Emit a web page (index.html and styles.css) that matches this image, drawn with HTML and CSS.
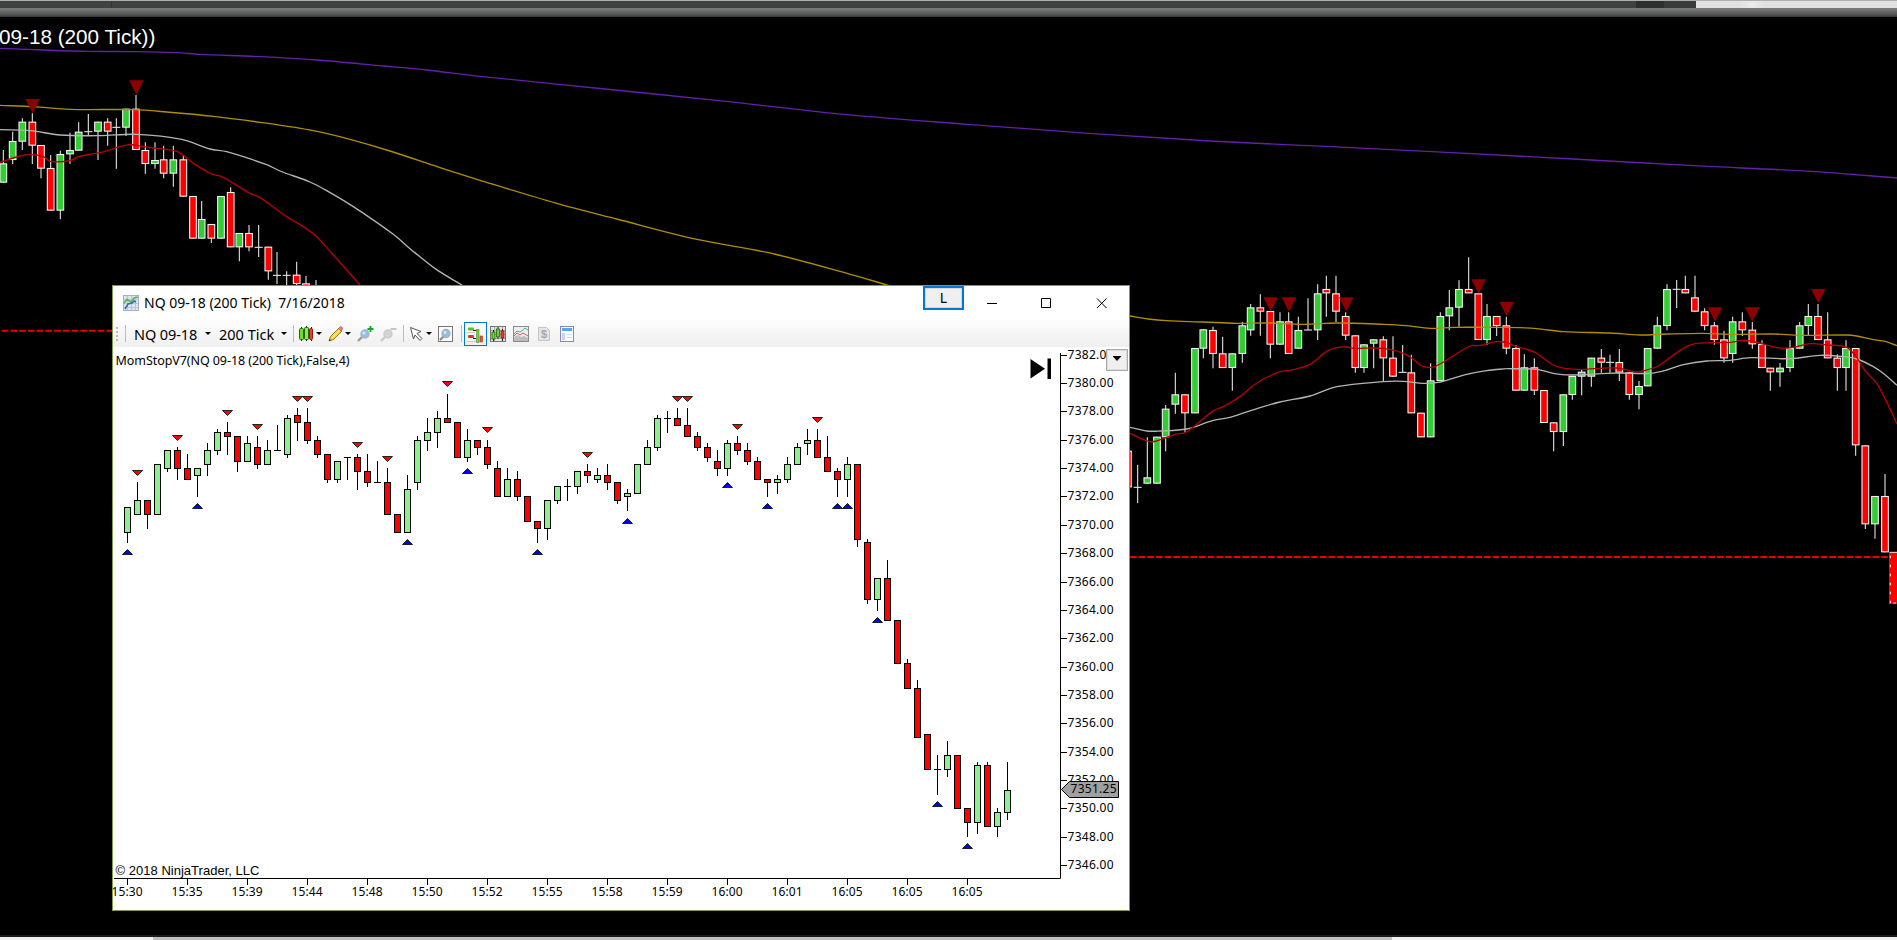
FILE: index.html
```html
<!DOCTYPE html>
<html lang="en">

<head>
    <meta charset="UTF-8" />
    <meta name="viewport" content="width=device-width, initial-scale=1.0" />
    <title>NQ 09-18 (200 Tick)</title>
    <link rel="stylesheet" href="styles.css">
</head>

<body>

    <header class="top-strip">
        <div class="tabs">
            <span class="tab-first"></span>
            <span class="tab-rest"></span>
            <span class="tab-dark"></span>
            <span class="tab-mid"></span>
            <span class="tab-light"></span>
        </div>
        <div class="bevel"></div>
    </header>

    <main class="workspace">
        <svg id="back-chart" class="back-chart" viewBox="0 17 1897 918"></svg>
        <div class="back-title">09-18 (200 Tick))</div>

        <div class="window">
            <div class="title-bar">
                <svg class="app-icon" viewBox="0 0 16 16">
                    <rect x=".5" y=".5" width="15" height="15" fill="#dfe4f2" stroke="#a9b0c6" />
                    <path d="M4.5 1v14M8.5 1v14M12.5 1v14M1 4.5h14M1 8.5h14M1 12.5h14" stroke="#bcc4dd" fill="none" />
                    <path d="M1 8L4 4.5 8 7l3-4 4-1" stroke="#5cb85c" stroke-width="1.8" fill="none" />
                    <path d="M2 14l3-5 4-1 2-2 2 1" stroke="#2f6ea5" stroke-width="1.6" fill="none" />
                </svg>
                <span class="title">NQ 09-18 (200 Tick)&nbsp; 7/16/2018</span>
                <button class="link-btn">L</button>
                <svg class="controls" viewBox="0 0 130 16">
                    <path d="M3 8.500h10M57.500 3.500h9v9h-9zM113 3.500l9.500 9.500M122.500 3.500l-9.500 9.500" fill="none" stroke="#000" />
                </svg>
            </div>

            <div class="toolbar">
                <span class="grip"></span>
                <span class="sep"></span>
                <span class="symbol">NQ 09-18</span>
                <i class="caret"></i>
                <span class="interval">200 Tick</span>
                <i class="caret"></i>
                <span class="sep sep-bars"></span>
                <svg class="icon icon-bars" viewBox="0 0 16 16">
                    <path d="M2.500 1v14M7.500 0v15M12.500 1v14" stroke="#222" />
                    <rect x=".5" y="2.500" width="4" height="11" rx="1" fill="#6fdc2a" stroke="#226014" />
                    <rect x="5.500" y="1.500" width="4" height="12" rx="1" fill="#8bea46" stroke="#226014" />
                    <rect x="10.500" y="2.500" width="3" height="11" rx="1" fill="#f03a2c" stroke="#8d1c14" />
                </svg>
                <i class="caret"></i>
                <svg class="icon icon-pencil" viewBox="0 0 16 16">
                    <path d="M1 15l1.500-4.500L11 2l3 3-8.500 8.500z" fill="#fbd63c" stroke="#9b7a18" />
                    <path d="M4 12l8-8" stroke="#fff3a5" />
                    <path d="M10.500 2.500L12 1q1-.8 2 .2t.3 2L13 5z" fill="#ef7f78" stroke="#b5524c" stroke-width=".7" />
                    <path d="M1 15l.7-2 1.300 1.300z" fill="#222" />
                </svg>
                <i class="caret"></i>
                <svg class="icon icon-zoom-in" viewBox="0 0 17 16">
                    <path d="M1 15l4-4" stroke="#9a9a9a" stroke-width="2.400" />
                    <circle cx="8" cy="8" r="4" fill="#8fc0e6" stroke="#a9b6c2" stroke-width="1.500" />
                    <circle cx="7" cy="7" r="1.500" fill="#d5ebfa" />
                    <path d="M13.500 0v6M10.500 3h6" stroke="#12a52a" stroke-width="1.800" />
                </svg>
                <svg class="icon icon-zoom-out" viewBox="0 0 17 16">
                    <path d="M1 15l4-4" stroke="#c9c9c9" stroke-width="2.400" />
                    <circle cx="8" cy="8" r="4" fill="#d4d4d4" stroke="#cbcbcb" stroke-width="1.500" />
                    <path d="M10.500 3h6" stroke="#b8b8b8" stroke-width="1.600" />
                </svg>
                <span class="sep sep-cursor"></span>
                <svg class="icon icon-cursor" viewBox="0 0 16 16">
                    <path d="M1.500 1.500l10.500 4-4 2 5 5-2 2-5-5.500-1.500 4z" fill="#fff" stroke="#555" />
                </svg>
                <i class="caret"></i>
                <svg class="icon icon-view" viewBox="0 0 16 16">
                    <rect x=".5" y=".5" width="14" height="15" fill="#fafafa" stroke="#777" />
                    <path d="M2 14l3.500-3.500" stroke="#888" stroke-width="2.200" />
                    <circle cx="8" cy="7.500" r="4" fill="#8fbfe4" stroke="#a5b1bd" stroke-width="1.300" />
                    <circle cx="7" cy="6.500" r="1.400" fill="#d5ebfa" />
                </svg>
                <span class="sep sep-panels"></span>
                <span class="selected">
                    <svg class="icon" viewBox="0 0 16 16">
                        <path d="M0 5.500h8M0 14.500h9" stroke="#c7c7c7" />
                        <rect x="1" y=".5" width="6" height="3" rx="1" fill="#52c41d" />
                        <path d="M6 3.500h4" stroke="#222" />
                        <rect x="1" y="8" width="6" height="3" rx="1" fill="#e3342b" />
                        <path d="M6 11.500h3" stroke="#222" />
                        <rect x="9.500" y="2.500" width="2.500" height="13" fill="#6bd42d" stroke="#578942" stroke-width=".6" />
                        <rect x="13" y="9" width="2.500" height="6" fill="#e84a3e" stroke="#a93b33" stroke-width=".6" />
                    </svg>
                </span>
                <svg class="icon icon-chart" viewBox="0 0 16 16">
                    <rect x=".5" y=".5" width="15" height="15" fill="#e3e3e3" stroke="#777" />
                    <path d="M1 4.500h14M1 8.500h14M1 12.500h14M4.500 1v14M12.500 1v14" stroke="#aaa" />
                    <path d="M3.500 4v11M8 1v12M12.500 3v12" stroke="#222" />
                    <rect x="2" y="6" width="3" height="7" fill="#6bd42d" stroke="#275d16" stroke-width=".8" />
                    <rect x="6.500" y="3" width="3" height="8" fill="#6bd42d" stroke="#275d16" stroke-width=".8" />
                    <rect x="11" y="5" width="3" height="7" fill="#e83a2c" stroke="#7f211b" stroke-width=".8" />
                </svg>
                <svg class="icon icon-area" viewBox="0 0 16 16">
                    <rect x=".5" y=".5" width="15" height="15" fill="#eee" stroke="#8a8a8a" />
                    <path d="M1 15v-4l4-2 3 2 3-1 4 2v3z" fill="#bdbdbd" />
                    <path d="M1 8l3-3 3 1 3-2 2-2 3 2" fill="none" stroke="#4cae8d" />
                    <path d="M1 10l3-3 3 2 3-2 5 3" fill="none" stroke="#d75a55" />
                </svg>
                <svg class="icon icon-dollar" viewBox="0 0 16 16">
                    <path d="M.5 1.500h8l3 3v10H.5z" fill="#e6e6e6" stroke="#c4c4c4" />
                    <text x="3" y="12" class="dollar">$</text>
                </svg>
                <svg class="icon icon-props" viewBox="0 0 16 16">
                    <rect x="1.500" y=".5" width="13" height="15" fill="#fafaff" stroke="#8586c4" />
                    <rect x="3" y="2" width="10" height="3" fill="#5aa7ee" />
                    <rect x="3" y="7" width="3" height="7" fill="#cfcff5" />
                    <path d="M7.500 8.500h5M7.500 11.500h5" stroke="#dadbea" />
                </svg>
            </div>

            <div class="chart-area">
                <svg id="front-chart" class="front-chart" viewBox="113 347 1016 563"></svg>
                <button class="menu-btn"><i class="caret"></i></button>
            </div>
        </div>
    </main>

    <footer class="scrollbar"><span class="thumb"></span></footer>

    <script src="chart.js"></script>
</body>

</html>
```
FILE: styles.css
```css
* {
    box-sizing: border-box;
}

body {
    margin: 0;
    height: 940px;
    display: flex;
    flex-direction: column;
    background-color: #000;
    font-family: "Noto Sans", "Open Sans", sans-serif;
    color: #000;
    overflow: hidden;
}

svg {
    display: block;
}

button {
    padding: 0;
    font-family: inherit;
}

/* top strip */
.top-strip {
    height: 17px;
    flex: none;
    border-top: 1px solid #abb0ae;
}

.tabs {
    display: flex;
    height: 7px;
    background-color: #404141;
}

.tab-first {
    width: 112px;
    border-right: 1px solid #333;
}

.tab-rest {
    width: 1524px;
}

.tab-dark {
    width: 28px;
    background-color: #2d2e2e;
}

.tab-mid {
    width: 32px;
    background-color: #393a3a;
}

.tab-light {
    flex: 1;
    background: linear-gradient(90deg, #e1e0e0 22%, #ebebeb 28%, #e1e0e0 34%);
}

.bevel {
    height: 9px;
    background: linear-gradient(#7c7c7c, #727272 25%, #484848 90%, #2d2d2d);
}

.workspace {
    position: relative;
    height: 918px;
    flex: none;
}

.back-chart {
    width: 1897px;
    height: 918px;
}

.back-title {
    position: absolute;
    left: -1px;
    top: 8px;
    font-family: "Liberation Sans", Arial, sans-serif;
    font-size: 20.7px;
    line-height: 24px;
    color: #fff;
    white-space: nowrap;
}

/* floating chart window */
.window {
    position: absolute;
    left: 112px;
    top: 268px;
    width: 1018px;
    height: 626px;
    border: 1px solid #7f9c50;
    background-color: #fff;
    display: flex;
    flex-direction: column;
}

.title-bar {
    height: 34px;
    display: flex;
    align-items: center;
    padding-left: 10px;
}

.app-icon {
    width: 16px;
    height: 16px;
    margin-right: 5px;
}

.title {
    width: 779px;
    font-size: 14px;
    line-height: 34px;
    white-space: nowrap;
}

.link-btn {
    align-self: flex-start;
    width: 41px;
    height: 24px;
    border: 2px solid #0078d7;
    box-shadow: inset 0 0 0 1px #d8d8d8;
    background-color: #efefef;
    font-size: 14px;
    line-height: 18px;
}

.controls {
    width: 130px;
    height: 16px;
    margin-left: 20px;
}

.toolbar {
    height: 27px;
    display: flex;
    align-items: center;
    padding-left: 3px;
    background: linear-gradient(#fdfdfd, #efefef);
    font-size: 14.5px;
    line-height: 28px;
    white-space: nowrap;
}

.grip {
    width: 2px;
    height: 14px;
    background: repeating-linear-gradient(#bbb 0 2px, transparent 2px 4px);
}

.sep {
    width: 1px;
    height: 17px;
    margin-left: 7px;
    background-color: #bdbdbd;
}

.symbol {
    width: 71px;
    margin-left: 8px;
    letter-spacing: -0.1px;
}

.interval {
    width: 62px;
    margin-left: 8px;
}

.caret {
    width: 6px;
    height: 3px;
    background-color: #000;
    clip-path: polygon(0 0, 100% 0, 50% 100%);
}

.icon {
    width: 16px;
    height: 16px;
    flex: none;
    margin-top: 1px;
}

.sep-bars {
    margin-left: 6px;
}

.icon-bars {
    margin-left: 5px;
    margin-right: 1px;
}

.icon-pencil {
    margin-left: 6px;
    margin-right: 1px;
}

.icon-zoom-in {
    width: 17px;
    margin-left: 6px;
}

.icon-zoom-out {
    width: 17px;
    margin-left: 6px;
}

.sep-cursor {
    margin-left: 6px;
}

.icon-cursor {
    margin-left: 5px;
    margin-right: 1px;
}

.icon-view {
    margin-left: 6px;
}

.sep-panels {
    margin-left: 7px;
}

.selected {
    width: 23px;
    height: 24px;
    margin-left: 2px;
    padding: 3px 0 0 2px;
    border: 1px solid #0078d7;
}

.icon-chart {
    margin-left: 3px;
}

.icon-area {
    margin-left: 7px;
}

.icon-dollar {
    margin-left: 9px;
}

.icon-props {
    margin-left: 5px;
}

.dollar {
    font: bold 11px "Liberation Sans", Arial, sans-serif;
    fill: #a6a6a6;
}

.chart-area {
    position: relative;
    height: 563px;
}

.front-chart {
    width: 1016px;
    height: 563px;
}

.axis-label {
    font-size: 12px;
}

.indicator {
    font-size: 12.5px;
}

.copyright {
    font-family: "Liberation Sans", Arial, sans-serif;
    font-size: 13px;
}

.menu-btn {
    position: absolute;
    left: 993px;
    top: 2px;
    width: 22px;
    height: 22px;
    border: 1px solid #aaa;
    box-shadow: inset 0 0 0 1px #dcdcdc;
    background-color: #efefef;
    display: flex;
    align-items: center;
    justify-content: center;
}

.menu-btn .caret {
    width: 9px;
    height: 5px;
    margin-top: -3px;
}

/* bottom scrollbar */
.scrollbar {
    flex: 1;
    border-top: 2px solid #1a1a1a;
    padding-left: 153px;
    background-color: #f0f0f0;
}

.thumb {
    display: block;
    width: 1239px;
    height: 3px;
    background-color: #bfbfbf;
}
```
FILE: chart.js
```js
const NS = 'http://www.w3.org/2000/svg';

function add(parent, name, attrs, text) {
    const el = document.createElementNS(NS, name);
    for (const key in attrs) el.setAttribute(key, attrs[key]);
    if (text) el.textContent = text;
    parent.appendChild(el);
    return el;
}

/* ---------- front chart ---------- */
const front = document.getElementById('front-chart');

// [high, top, bottom, low, color] measured from y = 360, one bar every 10px
const bars = [
    [147,147,172,182,'g'],[122,140,154,154,'g'],[140,140,154,168,'r'],[104,104,154,154,'g'],[90,90,108,111,'g'],
    [87,90,108,119,'r'],[94,108,119,119,'r'],[108,108,115,136,'g'],[83,90,104,115,'g'],[69,72,90,94,'g'],
    [62,72,76,94,'r'],[76,76,101,111,'r'],[76,83,101,101,'g'],[76,87,104,108,'r'],[80,90,104,104,'g'],
    [65,90,90,90,'d'],[55,58,94,97,'g'],[48,55,62,80,'r'],[48,62,80,83,'r'],[76,80,94,97,'r'],
    [94,94,119,122,'r'],[101,101,119,122,'g'],[97,97,97,119,'d'],[94,97,111,129,'r'],[94,111,122,126,'r'],
    [101,122,122,122,'d'],[108,122,154,154,'r'],[154,154,172,172,'r'],[115,129,172,172,'g'],[76,80,122,129,'g'],
    [58,72,80,90,'g'],[51,58,72,87,'g'],[34,58,62,62,'r'],[62,62,97,97,'r'],[69,80,97,101,'g'],
    [80,80,87,94,'r'],[80,87,104,108,'r'],[101,108,136,136,'r'],[108,119,136,136,'g'],[111,119,136,140,'r'],
    [136,136,161,161,'r'],[161,161,168,182,'r'],[140,140,168,179,'g'],[126,126,140,143,'g'],[119,126,126,140,'d'],
    [111,111,126,133,'g'],[104,111,115,122,'r'],[108,115,119,122,'g'],[104,115,122,129,'r'],[122,122,140,143,'r'],
    [129,133,136,150,'g'],[104,104,133,133,'g'],[80,87,104,104,'g'],[55,58,87,90,'g'],[51,58,58,72,'d'],
    [48,58,65,65,'r'],[48,65,76,76,'r'],[72,76,87,90,'r'],[83,87,97,101,'r'],[90,101,108,115,'r'],
    [80,83,108,115,'g'],[76,83,90,94,'r'],[83,90,101,104,'r'],[97,101,119,119,'r'],[119,119,122,136,'r'],
    [115,119,122,133,'g'],[97,104,119,122,'g'],[83,87,104,104,'g'],[69,80,83,94,'g'],[69,80,97,97,'r'],
    [76,97,111,111,'r'],[108,111,119,136,'r'],[97,104,119,136,'g'],[104,104,179,186,'r'],[179,182,239,243,'r'],
    [218,218,239,250,'g'],[200,218,260,260,'r'],[260,260,303,303,'r'],[299,303,328,328,'r'],[320,328,377,377,'r'],
    [374,374,409,409,'r'],[395,409,409,434,'d'],[381,395,409,416,'g'],[395,395,448,448,'r'],[448,448,462,476,'r'],
    [402,405,462,473,'g'],[402,405,466,466,'r'],[448,452,466,476,'g'],[402,430,452,459,'g']
];

bars.forEach(([high, top, bottom, low, color], i) => {
    const x = 127.5 + i * 10;
    add(front, 'path', { d: `M${x} ${360 + high}V${361 + low}`, stroke: '#000' });
    if (color === 'd') {
        add(front, 'path', { d: `M${x - 3.5} ${360.5 + top}h7`, stroke: '#000' });
    } else {
        add(front, 'rect', {
            x: x - 3, y: 360.5 + top, width: 6, height: bottom - top,
            fill: color === 'g' ? '#90ee90' : '#f00', stroke: '#000'
        });
    }
});

// [bar index, y from 360]
const sells = [[1,110],[5,75],[10,50],[13,64],[17,36],[18,36],[23,82],[26,96],[32,21],[36,67],[46,92],[55,36],[56,36],[61,64],[69,57]];
const buys = [[0,189],[7,143],[28,179],[34,108],[41,189],[50,158],[60,122],[64,143],[71,143],[72,143],[75,257],[81,441],[84,483]];

sells.forEach(([i, y]) => {
    add(front, 'path', { d: `M${122.5 + i * 10} ${360.5 + y}h10l-5 5z`, fill: '#f00', stroke: '#000', 'stroke-width': 0.8 });
});
buys.forEach(([i, y]) => {
    add(front, 'path', { d: `M${122.5 + i * 10} ${365.5 + y}h10l-5 -5z`, fill: '#00f', stroke: '#000', 'stroke-width': 0.8 });
});

// axes
add(front, 'path', { d: 'M114 878.5H1060.5V353', fill: 'none', stroke: '#000' });

for (let price = 7382; price >= 7346; price -= 2) {
    const y = Math.round(383 + (7380 - price) * 14.18);
    add(front, 'path', { d: `M1061 ${y + 0.5}h6`, stroke: '#000' });
    add(front, 'text', { x: 1067.5, y: y + 4, class: 'axis-label', textLength: 46 }, price.toFixed(2));
}

const times = ['15:30','15:35','15:39','15:44','15:48','15:50','15:52','15:55','15:58','15:59','16:00','16:01','16:05','16:05','16:05'];
times.forEach((time, i) => {
    const x = 127.5 + i * 60;
    add(front, 'path', { d: `M${x} 879v6`, stroke: '#000' });
    add(front, 'text', { x: x - 16, y: 896, class: 'axis-label', textLength: 31 }, time);
});

// last price marker
add(front, 'path', { d: 'M1061.5 789.5l8-8h49v16h-49z', fill: '#a0a0a0', stroke: '#000' });
add(front, 'text', { x: 1070.5, y: 793, class: 'axis-label', textLength: 46 }, '7351.25');

add(front, 'text', { x: 115.5, y: 365, class: 'indicator', textLength: 234 }, 'MomStopV7(NQ 09-18 (200 Tick),False,4)');
add(front, 'text', { x: 115.5, y: 875, class: 'copyright', textLength: 144 }, '© 2018 NinjaTrader, LLC');
add(front, 'path', { d: 'M1030.500 359v19.500l14.500-9.750zM1047.500 358.500h3.500v20.500h-3.500z' });

/* ---------- back chart, drawn in thirds of a pixel ---------- */
const back = add(document.getElementById('back-chart'), 'g', { transform: 'scale(0.333333)' });

// [x, high, top, bottom, low, color]
const leftBars = [
    [10,450,490,548,548,'g'],[38,395,423,480,492,'g'],[67,355,365,425,450,'g'],[97,340,365,437,492,'r'],
    [123,435,435,506,535,'r'],[152,465,504,632,632,'r'],[181,452,462,632,658,'g'],[210,398,450,463,492,'g'],
    [236,367,395,452,452,'g'],[265,342,395,395,408,'d'],[294,365,365,395,480,'g'],[323,355,365,395,437,'r'],
    [349,355,382,382,506,'d'],[378,326,326,383,408,'g'],[408,285,326,450,450,'r'],[436,427,450,492,521,'r'],
    [465,427,480,492,506,'g'],[491,437,478,521,535,'r'],[520,437,478,521,560,'g'],[550,465,478,590,590,'r'],
    [579,588,588,716,716,'r'],[605,603,657,716,716,'g'],[634,672,672,716,729,'r'],[663,588,588,716,716,'g'],
    [692,562,576,742,742,'r'],[718,699,699,742,784,'g'],[747,675,699,742,754,'r'],[776,675,742,742,771,'d'],
    [805,740,740,814,839,'r'],[831,756,826,826,852,'d'],[860,814,826,826,858,'d'],[890,785,824,852,858,'r'],
    [918,828,850,870,870,'r'],[948,840,866,866,870,'d']
];

const midBars = [
    [24,632,632,742,742,'r'],[53,674,742,742,790,'d'],[82,592,712,731,731,'g'],[111,590,590,731,731,'g'],
    [137,495,506,592,634,'g'],[166,398,463,494,521,'g'],[195,463,463,520,576,'r'],[225,324,324,520,520,'g'],
    [250,268,268,326,355,'g'],[279,260,270,342,385,'r'],[308,290,340,384,384,'r'],[337,340,340,384,452,'g'],
    [367,246,256,342,368,'g'],[392,192,202,271,287,'g'],[421,163,202,215,287,'r'],[451,213,213,314,355,'r'],
    [480,217,244,314,314,'g'],[506,217,244,342,342,'r'],[535,230,270,326,326,'g'],[564,175,270,270,270,'d'],
    [593,133,160,271,300,'g'],[619,107,147,160,230,'r'],[648,107,160,215,246,'r'],[677,217,228,287,300,'r'],
    [706,286,286,384,398,'r'],[732,313,313,384,398,'g'],[761,298,298,311,385,'g'],[790,289,298,355,423,'r'],
    [819,289,353,410,410,'r'],[848,315,397,397,397,'d'],[874,344,397,520,520,'r'],[903,518,518,592,592,'r'],
    [932,370,421,592,592,'g'],[961,217,228,423,423,'g'],[988,150,202,229,271,'g'],[1017,121,147,203,260,'g'],
    [1046,52,147,160,160,'r'],[1075,160,160,300,300,'r'],[1101,192,228,300,314,'g'],[1130,228,228,258,288,'r']
];

const rightBars = [
    [19,230,256,326,343,'r'],[48,315,324,452,452,'r'],[73,343,382,452,452,'g'],[103,355,382,452,465,'r'],
    [132,450,450,549,549,'r'],[161,547,547,576,634,'r'],[190,463,463,576,618,'g'],[217,408,408,465,479,'g'],
    [245,387,395,410,466,'g'],[274,353,353,410,440,'g'],[304,327,353,368,398,'r'],[330,344,367,367,398,'d'],
    [358,327,366,398,423,'r'],[388,397,397,465,479,'r'],[417,423,438,465,508,'g'],[443,324,324,439,439,'g'],
    [472,230,256,326,326,'g'],[501,133,147,258,271,'g'],[530,120,148,148,204,'d'],[556,107,147,160,160,'r'],
    [585,107,172,215,215,'r'],[614,205,214,258,271,'r'],[643,246,256,300,314,'r'],[672,272,298,355,368,'r'],
    [698,230,244,342,368,'g'],[727,217,244,271,288,'r'],[757,246,269,313,326,'r'],[786,301,312,384,384,'r'],
    [811,383,383,397,452,'r'],[840,369,383,397,440,'g'],[870,301,324,384,397,'g'],[899,246,256,326,326,'g'],
    [925,192,228,258,288,'g'],[954,192,228,300,300,'r'],[983,217,298,355,355,'r'],[1012,343,353,384,452,'r'],
    [1038,301,324,384,452,'g'],[1067,324,324,616,647,'r'],[1096,616,616,853,867,'r'],[1125,768,768,853,896,'g'],
    [1155,702,768,937,937,'r']
];

function drawBars(list, dx, dy) {
    const g = add(back, 'g', { transform: `translate(${dx} ${dy})` });
    list.forEach(([x, high, top, bottom, low, color]) => {
        add(g, 'path', { d: `M${x} ${high}V${low}`, stroke: '#e4e4e4', 'stroke-width': 3.3 });
        if (color === 'd') {
            add(g, 'path', { d: `M${x - 12} ${top}h24`, stroke: '#e4e4e4', 'stroke-width': 3.3 });
        } else {
            add(g, 'rect', {
                x: x - 10, y: top + 1.5, width: 20, height: Math.max(bottom - top - 3, 6),
                fill: color === 'g' ? '#32cd32' : '#f00', stroke: '#f2f2f2', 'stroke-width': 3.3
            });
        }
    });
}

// smooth curve through all the points
function drawLine(points, color, dx, dy) {
    const p = points.split(' ').map(s => s.split(',').map(Number));
    let d = `M${p[0]}`;
    for (let i = 0; i < p.length - 1; i++) {
        const [x1, y1] = p[i];
        const [x2, y2] = p[i + 1];
        const prev = p[i - 1] || p[i];
        const next = p[i + 2] || p[i + 1];
        const t = (x2 - x1) / 3;
        const s1 = (y2 - prev[1]) / (x2 - prev[0]);
        const s2 = (next[1] - y1) / (next[0] - x1);
        d += `C${x1 + t} ${y1 + t * s1} ${x2 - t} ${y2 - t * s2} ${x2} ${y2}`;
    }
    add(back, 'path', { d, fill: 'none', stroke: color, 'stroke-width': 4, transform: `translate(${dx} ${dy})` });
}

drawBars(leftBars, 0, 0);
drawBars(midBars, 3360, 720);
drawBars(rightBars, 4500, 720);

// current bar, cut by the right edge
add(back, 'rect', { x: 5667, y: 1656, width: 40, height: 156, fill: '#f00' });
add(back, 'path', { d: 'M5671 1810V1657', stroke: '#eee', 'stroke-width': 3, 'stroke-dasharray': '8 19' });
add(back, 'path', { d: 'M5669 1657h30', stroke: '#e6e6e6', 'stroke-width': 3 });
add(back, 'path', { d: 'M5680 1809h8', stroke: '#eee', 'stroke-width': 3 });

// purple
drawLine('0,145 130,150 265,154 410,155 530,158 600,163 780,170 950,180 1150,198 1280,210 1440,229 1815,267 2178,304 2541,344 2904,373 3267,400 3630,423 3993,440 4356,458 4719,477 5082,497 5445,515 5691,534', '#6420ac', 0, 0);

// gold
const gold = '#b08e00';
drawLine('0,316 100,320 210,328 400,329 500,336 640,349 780,367 940,392 1050,418 1170,453 1320,503 1440,541 1670,610 1850,657 2080,716 2323,762 2541,820 2668,857', gold, 0, 0);
drawLine('20,226 30,228 85,237 140,242 250,246 350,250 450,249 550,253 650,249 790,253 860,257 930,265 1000,262 1140,262', gold, 3360, 720);
drawLine('0,262 60,263 110,266 190,275 330,279 420,285 500,282 610,280 700,283 820,282 900,286 1040,285 1070,288 1120,299 1155,304 1191,317', gold, 4500, 720);

// white
const white = '#b4b4b4';
drawLine('0,389 90,392 180,405 300,407 410,403 545,418 630,447 680,455 800,494 840,513 930,546 980,572 1060,620 1180,703 1230,746 1310,809 1386,855', white, 0, 0);
drawLine('20,560 30,562 80,573 120,573 200,567 280,541 330,532 420,503 480,486 570,468 650,440 790,425 850,424 910,430 950,428 980,421 1040,403 1100,392 1160,386', white, 3360, 720);
drawLine('20,386 110,388 160,400 210,405 320,400 360,399 450,400 500,390 550,374 620,363 690,361 750,353 870,356 960,346 1030,350 1070,357 1120,380 1155,404 1191,436', white, 4500, 720);

// red
const red = '#b80000';
drawLine('0,487 60,468 95,464 130,470 150,484 210,482 235,470 300,458 385,434 415,437 450,443 530,454 560,474 580,490 635,522 665,530 750,580 780,593 860,650 910,680 950,710 1000,765 1080,855', red, 0, 0);
drawLine('20,576 30,580 85,604 110,603 165,583 200,576 280,512 310,500 365,466 395,440 425,420 480,395 510,391 570,373 620,334 650,323 680,321 700,325 790,325 850,340 880,358 905,378 935,382 960,372 1050,318 1075,317 1130,305 1160,307', red, 3360, 720);
drawLine('20,307 50,320 105,337 160,375 200,386 240,388 350,384 400,395 420,395 475,378 500,360 555,322 590,310 690,307 730,301 765,306 840,324 880,322 930,311 980,315 1040,322 1070,352 1096,393 1130,430 1155,475 1191,552', red, 4500, 720);

// dashed stop levels
add(back, 'path', { d: 'M5 992H340', stroke: '#e80000', 'stroke-width': 6, 'stroke-dasharray': '20 6.2' });
add(back, 'path', { d: 'M3390 1671H5667', stroke: '#e80000', 'stroke-width': 6, 'stroke-dasharray': '20 5.900' });

// sell arrows
[[98,297],[409,241],[3812,892],[3867,892],[4039,892],[4436,838],[4520,906],[5145,922],[5257,922],[5455,867]].forEach(([x, y]) => {
    add(back, 'path', { d: `M${x - 22} ${y}h44l-22 43z`, fill: '#8b0000' });
});
```
